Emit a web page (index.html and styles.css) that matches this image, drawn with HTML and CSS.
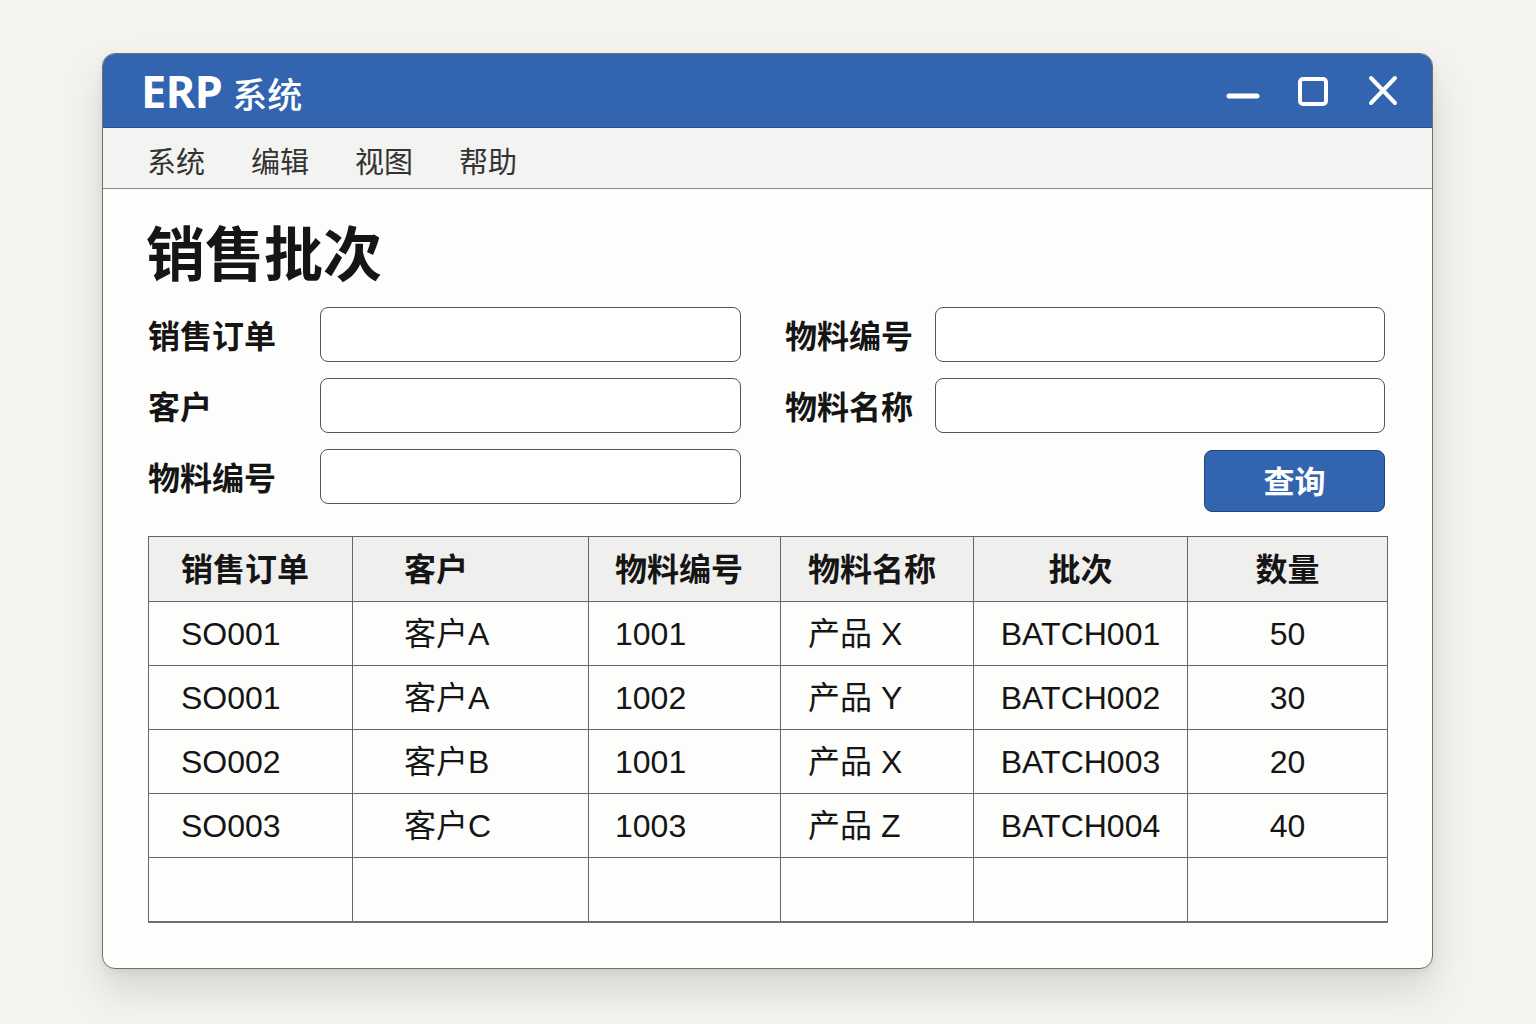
FILE: index.html
```html
<!DOCTYPE html>
<html lang="zh-CN">
<head>
<meta charset="utf-8">
<title>ERP 系统</title>
<link rel="stylesheet" href="styles.css">
</head>
<body>
<div class="window">
  <div class="titlebar">
    <div class="title">ERP<span class="cjk">系统</span></div>
    <div class="controls">
      <svg class="ctl ctl-min" width="34" height="34" viewBox="0 0 34 34"><line x1="3" y1="22" x2="31" y2="22" stroke="#fff" stroke-width="5" stroke-linecap="round"/></svg>
      <svg class="ctl ctl-max" width="34" height="34" viewBox="0 0 34 34"><rect x="4" y="5" width="26" height="25" rx="3" fill="none" stroke="#fff" stroke-width="4"/></svg>
      <svg class="ctl ctl-close" width="34" height="34" viewBox="0 0 34 34"><path d="M5 4 L29 29 M29 4 L5 29" stroke="#fff" stroke-width="4" stroke-linecap="round"/></svg>
    </div>
  </div>
  <div class="menubar">
    <span class="menu-item">系统</span>
    <span class="menu-item">编辑</span>
    <span class="menu-item">视图</span>
    <span class="menu-item">帮助</span>
  </div>
  <div class="content">
    <h1 class="heading">销售批次</h1>
    <div class="form">
      <label class="label">销售订单</label>
      <div class="input"></div>
      <span></span>
      <label class="label">物料编号</label>
      <div class="input"></div>

      <label class="label">客户</label>
      <div class="input"></div>
      <span></span>
      <label class="label">物料名称</label>
      <div class="input"></div>

      <label class="label">物料编号</label>
      <div class="input"></div>
      <span></span>
      <div class="btn-cell"><button class="btn">查询</button></div>
    </div>
    <table class="grid">
      <colgroup>
        <col class="c1"><col class="c2"><col class="c3"><col class="c4"><col class="c5"><col class="c6">
      </colgroup>
      <thead>
        <tr>
          <th class="p1">销售订单</th>
          <th class="p2">客户</th>
          <th class="p3">物料编号</th>
          <th class="p4">物料名称</th>
          <th class="ctr">批次</th>
          <th class="ctr">数量</th>
        </tr>
      </thead>
      <tbody>
        <tr><td class="p1">SO001</td><td class="p2">客户A</td><td class="p3">1001</td><td class="p4">产品 X</td><td class="ctr">BATCH001</td><td class="ctr">50</td></tr>
        <tr><td class="p1">SO001</td><td class="p2">客户A</td><td class="p3">1002</td><td class="p4">产品 Y</td><td class="ctr">BATCH002</td><td class="ctr">30</td></tr>
        <tr><td class="p1">SO002</td><td class="p2">客户B</td><td class="p3">1001</td><td class="p4">产品 X</td><td class="ctr">BATCH003</td><td class="ctr">20</td></tr>
        <tr><td class="p1">SO003</td><td class="p2">客户C</td><td class="p3">1003</td><td class="p4">产品 Z</td><td class="ctr">BATCH004</td><td class="ctr">40</td></tr>
        <tr><td></td><td></td><td></td><td></td><td></td><td></td></tr>
      </tbody>
    </table>
  </div>
</div>
</body>
</html>
```

FILE: styles.css
```css
* { box-sizing: border-box; }
html, body { margin: 0; padding: 0; }
body {
  background: #f4f3f0;
  width: 1536px;
  height: 1024px;
  overflow: hidden;
  font-family: "Liberation Sans", "Noto Sans CJK SC", sans-serif;
  color: #111;
  padding: 53px 0 0 102px;
}
.window {
  width: 1331px;
  height: 916px;
  border: 1.5px solid #6f6f6f;
  border-radius: 13px;
  background: #fdfdfb;
  overflow: hidden;
  box-shadow: 0 22px 40px rgba(0,0,0,0.12), 0 4px 8px rgba(0,0,0,0.06);
  display: flex;
  flex-direction: column;
}
.titlebar {
  height: 74px;
  background: #3264b0;
  border-bottom: 1.5px solid #2a4f8c;
  display: flex;
  align-items: center;
  justify-content: space-between;
  padding: 0 32px 0 38px;
  flex: none;
}
.title {
  color: #fff;
  font-family: "Noto Sans", "Noto Sans CJK SC", sans-serif;
  font-weight: 700;
  font-size: 45px;
  line-height: 1;
  letter-spacing: -0.5px;
}
.title .cjk {
  font-family: "Noto Sans CJK SC", sans-serif;
  font-weight: 500;
  font-size: 35px;
  letter-spacing: 0;
  margin-left: 10px;
}
.controls {
  display: flex;
  align-items: center;
  gap: 36px;
}
.ctl { display: block; }
.menubar {
  height: 61px;
  background: #f3f3f1;
  border-bottom: 1.5px solid #8a8a8a;
  display: flex;
  align-items: center;
  gap: 46px;
  padding: 4px 0 0 44px;
  flex: none;
}
.menu-item {
  font-family: "Noto Sans CJK SC", sans-serif;
  font-size: 29px;
  color: #333;
  line-height: 1;
}
.content {
  padding: 0 45px;
  flex: 1;
}
.heading {
  font-family: "Noto Sans CJK SC", sans-serif;
  font-weight: 700;
  font-size: 59px;
  line-height: 70px;
  margin: 27px 0 0 -2px;
  color: #151515;
}
.form {
  margin-top: 21px;
  display: grid;
  grid-template-columns: 172px 421px 44px 150px 450px;
  grid-auto-rows: auto;
  row-gap: 16px;
  align-items: start;
}
.label {
  font-family: "Noto Sans CJK SC", sans-serif;
  font-weight: 700;
  font-size: 32px;
  line-height: 55px;
  color: #151515;
}
.input {
  height: 55px;
  background: #fff;
  border: 1.5px solid #555;
  border-radius: 8px;
}
.btn-cell {
  grid-column: 4 / 6;
  display: flex;
  justify-content: flex-end;
}
.btn {
  width: 181px;
  height: 62px;
  margin-top: 1px;
  background: #3264b0;
  border: 1.5px solid #1f4582;
  border-radius: 8px;
  color: #fff;
  font-family: "Noto Sans CJK SC", sans-serif;
  font-weight: 700;
  font-size: 31px;
  line-height: 1;
  padding: 0 0 3px;
}
.grid {
  margin-top: 24px;
  width: 1239px;
  border-collapse: collapse;
  table-layout: fixed;
}
.c1 { width: 204px; }
.c2 { width: 236px; }
.c3 { width: 192px; }
.c4 { width: 193px; }
.c5 { width: 214px; }
.c6 { width: 200px; }
.grid th, .grid td {
  border: 1.5px solid #666;
  height: 64px;
  padding: 0;
  font-size: 32px;
  line-height: 32px;
  text-align: left;
  white-space: nowrap;
  color: #151515;
}
.grid th {
  background: #efefed;
  font-family: "Noto Sans CJK SC", sans-serif;
  font-weight: 700;
  height: 65px;
  padding-bottom: 4px;
}
.grid td {
  font-family: "Liberation Sans", "Noto Sans CJK SC", sans-serif;
  font-weight: 400;
  background: #fdfdfb;
}
.grid tbody tr:last-child td { border-bottom: 2.5px solid #707070; }
.p1 { padding-left: 32px !important; }
.p2 { padding-left: 51px !important; }
.p3 { padding-left: 26px !important; }
.p4 { padding-left: 27px !important; }
.ctr { text-align: center !important; }
```
